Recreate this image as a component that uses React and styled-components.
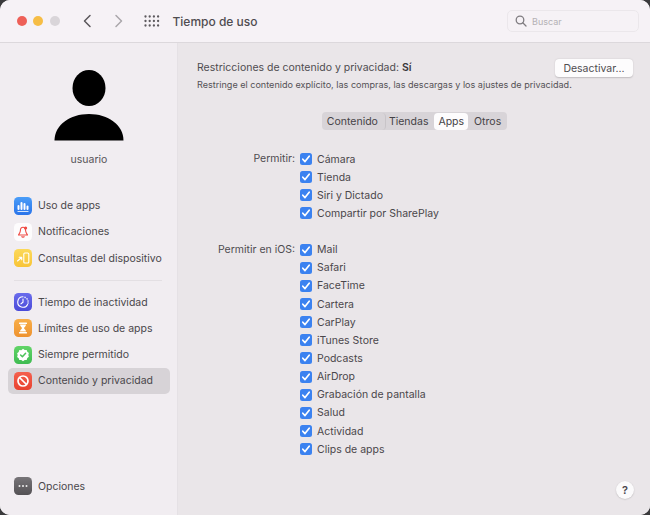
import React from "react";
import styled, { createGlobalStyle } from "styled-components";

const GlobalStyle = createGlobalStyle`
  html, body {
    margin: 0;
    padding: 0;
    width: 650px;
    height: 515px;
    overflow: hidden;
    background: #3a3a3c;
    font-family: "Inter", "Liberation Sans", sans-serif;
    color: #3d3a3e;
  }
`;

const Window = styled.div`
  width: 650px;
  height: 515px;
  border-radius: 10px;
  overflow: hidden;
  display: flex;
  flex-direction: column;
  background: #f1edf1;
`;

const TitleBar = styled.header`
  height: 43px;
  flex: none;
  box-sizing: border-box;
  display: flex;
  align-items: center;
  padding: 0 11px 0 16.5px;
  background: #f6f2f6;
  border-bottom: 1px solid #dcd8dc;
`;

const Light = styled.span`
  width: 10px;
  height: 10px;
  border-radius: 50%;
  margin-right: 6.5px;
  background: ${(p) => p.$color};
`;

const NavButton = styled.svg`
  width: 10px;
  height: 14px;
  margin-left: ${(p) => p.$gap}px;
  fill: none;
  stroke: ${(p) => p.$color};
  stroke-width: 1.5;
  stroke-linecap: round;
  stroke-linejoin: round;
`;

const GridIcon = styled.svg`
  width: 16px;
  height: 12px;
  margin-left: 20px;
  fill: #5d5a5e;
`;

const Title = styled.h1`
  margin: 0 0 0 13px;
  font-size: 12px;
  font-weight: 500;
  color: #4f4c50;
  flex: 1;
`;

const Search = styled.div`
  width: 132px;
  height: 22px;
  box-sizing: border-box;
  display: flex;
  align-items: center;
  gap: 5px;
  padding-left: 7px;
  border: 1px solid #ebe7eb;
  border-radius: 5px;
  font-size: 9px;
  color: #b4b1b5;
`;

const SearchIcon = styled.svg`
  width: 12px;
  height: 12px;
  fill: none;
  stroke: #7f7c80;
  stroke-width: 1.3;
  stroke-linecap: round;
`;

const Body = styled.div`
  flex: 1;
  display: flex;
  min-height: 0;
`;

const Sidebar = styled.aside`
  width: 178px;
  flex: none;
  box-sizing: border-box;
  display: flex;
  flex-direction: column;
  padding: 27px 7px 0 8px;
  background: #f1edf1;
  border-right: 1px solid #e5e1e5;
`;

const Profile = styled.div`
  display: flex;
  flex-direction: column;
  align-items: center;
  gap: 11px;
  margin-bottom: 26.5px;
`;

const Avatar = styled.svg`
  width: 70px;
  height: 72px;
  margin-right: 1px;
`;

const UserName = styled.div`
  font-size: 10.5px;
  line-height: 13px;
  color: #575458;
`;

const Group = styled.nav`
  display: flex;
  flex-direction: column;
`;

const Divider = styled.div`
  height: 1px;
  margin: 8.5px 8px 8px 6px;
  background: #e3dfe3;
`;

const Item = styled.div`
  height: 26.3px;
  box-sizing: border-box;
  display: flex;
  align-items: center;
  gap: 6px;
  padding-left: 6px;
  border-radius: 5px;
  font-size: 10.5px;
  color: #4a474b;
  background: ${(p) => (p.$active ? "#d7d3d7" : "transparent")};
`;

const OptionsRow = styled(Item)`
  margin-top: auto;
  margin-bottom: 15.5px;
`;

const AppIcon = styled.span`
  width: 18px;
  height: 18px;
  flex: none;
  display: flex;
  align-items: center;
  justify-content: center;
  border-radius: 4.5px;
  background: ${(p) => p.$bg};
`;

const Glyph = styled.svg`
  width: 14px;
  height: 14px;
`;

const Main = styled.main`
  flex: 1;
  min-width: 0;
  position: relative;
  box-sizing: border-box;
  padding: 16px 17px 0 19px;
  background: #eae6e9;
`;

const HeaderRow = styled.div`
  display: flex;
  justify-content: space-between;
  align-items: flex-start;
`;

const Heading = styled.div`
  font-size: 10.5px;
  line-height: 18px;
  color: #4f4c50;

  b {
    font-weight: 600;
    color: #3a373b;
  }
`;

const Sub = styled.div`
  font-size: 9.07px;
  line-height: 12px;
  margin-top: 2px;
  color: #545155;
`;

const Button = styled.button`
  width: 78px;
  height: 18px;
  padding: 0;
  border: none;
  border-radius: 4px;
  background: #fdfcfd;
  box-shadow: 0 0.5px 1.5px rgba(0, 0, 0, 0.18);
  font: inherit;
  font-size: 10.5px;
  color: #4f4c50;
`;

const TabsWrap = styled.div`
  display: flex;
  justify-content: center;
  margin: 21px 0 20px;
  padding-right: 1px;
`;

const Tabs = styled.div`
  display: flex;
  align-items: center;
  height: 18px;
  border-radius: 4px;
  background: #d8d4d8;
`;

const Tab = styled.div`
  height: 17px;
  display: flex;
  align-items: center;
  padding: 0 ${(p) => p.$right}px 0 ${(p) => p.$left}px;
  border-radius: 4px;
  font-size: 10.5px;
  color: #454246;
  background: ${(p) => (p.$active ? "#fdfcfd" : "transparent")};
  border-right: ${(p) => (p.$line ? "1px solid #c8c4c8" : "none")};
`;

const Section = styled.section`
  display: grid;
  grid-template-columns: 98px 1fr;
  column-gap: 5px;
  margin-bottom: 18px;
`;

const SectionLabel = styled.div`
  text-align: right;
  font-size: 10.5px;
  line-height: 18.1px;
  color: #4f4c50;
`;

const Checks = styled.div`
  display: flex;
  flex-direction: column;
`;

const Check = styled.div`
  height: 18.15px;
  display: flex;
  align-items: center;
  gap: 5px;
  font-size: 10.5px;
  color: #4a474b;
`;

const Box = styled.svg`
  width: 12px;
  height: 12px;
  flex: none;
`;

const Help = styled.div`
  position: absolute;
  right: 16px;
  bottom: 16px;
  width: 18px;
  height: 18px;
  display: flex;
  align-items: center;
  justify-content: center;
  border-radius: 50%;
  background: #fbfafb;
  box-shadow: 0 0.5px 1.5px rgba(0, 0, 0, 0.2);
  font-size: 11px;
  font-weight: 600;
  color: #4a474b;
`;

const CheckBox = () => (
  <Box viewBox="0 0 12 12">
    <rect width="12" height="12" rx="2.5" fill="#3b82f0" />
    <path d="M2.8 6.2 5 8.6 9.2 3.2" fill="none" stroke="#fff" strokeWidth="1.7" strokeLinecap="round" strokeLinejoin="round" />
  </Box>
);

const icons = {
  apps: (
    <Glyph viewBox="0 0 14 14" fill="#fff">
      <rect x="1.5" y="6" width="2" height="5" rx="1" />
      <rect x="4.5" y="3" width="2" height="8" rx="1" />
      <rect x="7.5" y="4" width="2" height="7" rx="1" />
      <rect x="10.5" y="6.5" width="2" height="4.5" rx="1" />
      <rect x="1.5" y="12" width="11" height="0.8" />
    </Glyph>
  ),
  bell: (
    <Glyph viewBox="0 0 14 14" fill="none" stroke="#ef4a44" strokeWidth="1.1" strokeLinejoin="round">
      <path d="M7 2.2C5 2.2 4.4 4 4.4 5.6c0 2-1.4 3.4-1.9 4.4h9c-.5-1-1.9-2.4-1.9-4.4C9.6 4 9 2.2 7 2.2Z" />
      <path d="M5.6 11.2a1.5 1.5 0 0 0 2.8 0" />
      <circle cx="9.6" cy="3" r="1.6" fill="#ef4a44" stroke="none" />
    </Glyph>
  ),
  pickup: (
    <Glyph viewBox="0 0 14 14" fill="none" stroke="#fff" strokeWidth="1.1" strokeLinecap="round" strokeLinejoin="round">
      <rect x="7.8" y="2" width="5" height="10" rx="1" />
      <path d="M1.5 10 5.5 6.5M3.2 6.2h2.5v2.5" />
    </Glyph>
  ),
  downtime: (
    <Glyph viewBox="0 0 14 14" fill="none" stroke="#fff" strokeWidth="1.1" strokeLinecap="round">
      <path d="M7 1.8A5.2 5.2 0 1 0 11.6 9.4" />
      <path d="M7 4v3.2L5 8.8" />
      <path d="M9 2.3l.1.1M11 3.8l.1.1M12 6l.1.1M12 8l.1.1" strokeWidth="1.4" />
    </Glyph>
  ),
  hourglass: (
    <Glyph viewBox="0 0 14 14" fill="#fff">
      <rect x="3" y="1.5" width="8" height="1.4" rx="0.5" />
      <rect x="3" y="11.1" width="8" height="1.4" rx="0.5" />
      <path d="M4 3.4h6c0 2-2 2.6-2 3.6s2 1.6 2 3.6H4c0-2 2-2.6 2-3.6S4 5.4 4 3.4Z" />
    </Glyph>
  ),
  allowed: (
    <Glyph viewBox="0 0 14 14">
      <path d="M7 1.2 8.7 2.4l2-.1.6 1.9 1.6 1.2L12.3 7.3l.6 1.9-1.6 1.2-.6 1.9-2 .1L7 13.6l-1.7-1.2-2 .1-.6-1.9-1.6-1.2.6-1.9-.6-1.9 1.6-1.2.6-1.9 2 .1Z" fill="#fff" transform="translate(0 -.4)" />
      <path d="M4.6 7 6.4 8.8 9.6 5.2" fill="none" stroke="#4cc35a" strokeWidth="1.5" strokeLinecap="round" strokeLinejoin="round" />
    </Glyph>
  ),
  blocked: (
    <Glyph viewBox="0 0 14 14" fill="none" stroke="#fff" strokeWidth="1.7">
      <circle cx="7" cy="7" r="5" />
      <path d="M3.5 3.5l7 7" />
    </Glyph>
  ),
  dots: (
    <Glyph viewBox="0 0 14 14" fill="#eee">
      <circle cx="3.5" cy="7" r="1" />
      <circle cx="7" cy="7" r="1" />
      <circle cx="10.5" cy="7" r="1" />
    </Glyph>
  ),
};

const usage = [
  { key: "apps", label: "Uso de apps", bg: "linear-gradient(#4a9df8, #2a74ea)" },
  { key: "bell", label: "Notificaciones", bg: "#fdfcfd" },
  { key: "pickup", label: "Consultas del dispositivo", bg: "linear-gradient(#fcd95a, #f8c437)" },
];

const limits = [
  { key: "downtime", label: "Tiempo de inactividad", bg: "linear-gradient(#6a6cec, #4a4ad8)" },
  { key: "hourglass", label: "Límites de uso de apps", bg: "linear-gradient(#f8ae48, #ee9230)" },
  { key: "allowed", label: "Siempre permitido", bg: "linear-gradient(#62d468, #3fbb52)" },
  { key: "blocked", label: "Contenido y privacidad", bg: "linear-gradient(#f4604e, #e8422f)", active: true },
];

const allow = ["Cámara", "Tienda", "Siri y Dictado", "Compartir por SharePlay"];
const allowIos = [
  "Mail",
  "Safari",
  "FaceTime",
  "Cartera",
  "CarPlay",
  "iTunes Store",
  "Podcasts",
  "AirDrop",
  "Grabación de pantalla",
  "Salud",
  "Actividad",
  "Clips de apps",
];

const App = () => (
  <Window>
    <GlobalStyle />
    <TitleBar>
      <Light $color="#ee6058" />
      <Light $color="#f6bd45" />
      <Light $color="#d9d5d9" />
      <NavButton $gap={16} $color="#5a575b" viewBox="0 0 10 14">
        <path d="M8 1.5 2.5 7 8 12.5" />
      </NavButton>
      <NavButton $gap={21.5} $color="#aaa7ab" viewBox="0 0 10 14">
        <path d="M2 1.5 7.5 7 2 12.5" />
      </NavButton>
      <GridIcon viewBox="0 0 16 12">
        {[1.5, 6, 10.5].map((y) =>
          [1.5, 5.7, 9.9, 14.1].map((x) => <circle key={`${x}-${y}`} cx={x} cy={y} r="1.15" />)
        )}
      </GridIcon>
      <Title>Tiempo de uso</Title>
      <Search>
        <SearchIcon viewBox="0 0 12 12">
          <circle cx="5" cy="5" r="3.8" />
          <path d="M8 8l3 3" />
        </SearchIcon>
        Buscar
      </Search>
    </TitleBar>
    <Body>
      <Sidebar>
        <Profile>
          <Avatar viewBox="0 0 70 72">
            <ellipse cx="35" cy="18" rx="16.5" ry="18" fill="#000" />
            <path d="M0.5 70.5C0.5 55 16 44 35 44s34.5 11 34.5 26.5Z" fill="#000" />
          </Avatar>
          <UserName>usuario</UserName>
        </Profile>
        <Group>
          {usage.map((i) => (
            <Item key={i.key}>
              <AppIcon $bg={i.bg}>{icons[i.key]}</AppIcon>
              {i.label}
            </Item>
          ))}
        </Group>
        <Divider />
        <Group>
          {limits.map((i) => (
            <Item key={i.key} $active={i.active}>
              <AppIcon $bg={i.bg}>{icons[i.key]}</AppIcon>
              {i.label}
            </Item>
          ))}
        </Group>
        <OptionsRow>
          <AppIcon $bg="linear-gradient(#777478, #545155)">{icons.dots}</AppIcon>
          Opciones
        </OptionsRow>
      </Sidebar>
      <Main>
        <HeaderRow>
          <Heading>
            Restricciones de contenido y privacidad: <b>Sí</b>
          </Heading>
          <Button>Desactivar...</Button>
        </HeaderRow>
        <Sub>Restringe el contenido explícito, las compras, las descargas y los ajustes de privacidad.</Sub>
        <TabsWrap>
          <Tabs>
            <Tab $left={5} $right={7} $line>Contenido</Tab>
            <Tab $left={3} $right={6}>Tiendas</Tab>
            <Tab $left={4} $right={4} $active>Apps</Tab>
            <Tab $left={6} $right={6}>Otros</Tab>
          </Tabs>
        </TabsWrap>
        <Section>
          <SectionLabel>Permitir:</SectionLabel>
          <Checks>
            {allow.map((c) => (
              <Check key={c}>
                <CheckBox />
                {c}
              </Check>
            ))}
          </Checks>
        </Section>
        <Section>
          <SectionLabel>Permitir en iOS:</SectionLabel>
          <Checks>
            {allowIos.map((c) => (
              <Check key={c}>
                <CheckBox />
                {c}
              </Check>
            ))}
          </Checks>
        </Section>
        <Help>?</Help>
      </Main>
    </Body>
  </Window>
);

export default App;
